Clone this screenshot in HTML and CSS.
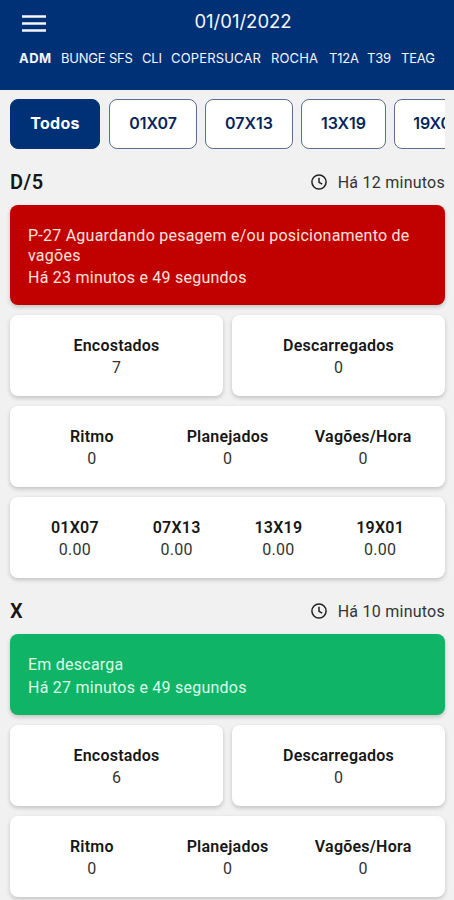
FILE: index.html
```
<!DOCTYPE html>
<html lang="pt-BR">
<head>
<meta charset="utf-8">
<meta name="viewport" content="width=device-width, initial-scale=1">
<title>Terminais</title>
<link rel="stylesheet" href="styles.css">
</head>
<body>
<header class="header">
  <div class="topbar">
    <svg class="menu" viewBox="0 0 24 17" width="24" height="17"><path d="M0 1.5h24M0 8.5h24M0 15.5h24" stroke="#f4f7fc" stroke-width="2.7"/></svg>
    <h1 class="date">01/01/2022</h1>
  </div>
  <nav class="tabs">
    <a class="tab tab-active">ADM</a><a class="tab">BUNGE SFS</a><a class="tab">CLI</a><a class="tab tab-wide">COPERSUCAR</a><a class="tab tab-wide">ROCHA</a><a class="tab">T12A</a><a class="tab">T39</a><a class="tab">TEAG</a>
  </nav>
</header>
<main class="content">
  <div class="chips">
    <button class="chip chip-active">Todos</button><button class="chip">01X07</button><button class="chip">07X13</button><button class="chip">13X19</button><button class="chip">19X01</button>
  </div>
  <section class="group">
    <div class="group-head">
      <h2 class="name">D/5</h2>
      <div class="ago"><svg class="clock" viewBox="0 0 16 16" width="16" height="16"><circle cx="8" cy="8" r="7.1"/><path d="M8 3.8v4.5l3.2 1.9"/></svg><span>Há 12 minutos</span></div>
    </div>
    <div class="alert alert-red"><p class="alert-title">P-27 Aguardando pesagem e/ou posicionamento de vagões</p><p class="alert-time">Há 23 minutos e 49 segundos</p></div>
    <div class="pair">
      <div class="card"><div class="stat"><b>Encostados</b><span>7</span></div></div>
      <div class="card"><div class="stat"><b>Descarregados</b><span>0</span></div></div>
    </div>
    <div class="card">
      <div class="stat"><b>Ritmo</b><span>0</span></div>
      <div class="stat"><b>Planejados</b><span>0</span></div>
      <div class="stat"><b>Vagões/Hora</b><span>0</span></div>
    </div>
    <div class="card">
      <div class="stat"><b>01X07</b><span>0.00</span></div>
      <div class="stat"><b>07X13</b><span>0.00</span></div>
      <div class="stat"><b>13X19</b><span>0.00</span></div>
      <div class="stat"><b>19X01</b><span>0.00</span></div>
    </div>
  </section>
  <section class="group">
    <div class="group-head">
      <h2 class="name">X</h2>
      <div class="ago"><svg class="clock" viewBox="0 0 16 16" width="16" height="16"><circle cx="8" cy="8" r="7.1"/><path d="M8 3.8v4.5l3.2 1.9"/></svg><span>Há 10 minutos</span></div>
    </div>
    <div class="alert alert-green"><p class="alert-title">Em descarga</p><p class="alert-time">Há 27 minutos e 49 segundos</p></div>
    <div class="pair">
      <div class="card"><div class="stat"><b>Encostados</b><span>6</span></div></div>
      <div class="card"><div class="stat"><b>Descarregados</b><span>0</span></div></div>
    </div>
    <div class="card">
      <div class="stat"><b>Ritmo</b><span>0</span></div>
      <div class="stat"><b>Planejados</b><span>0</span></div>
      <div class="stat"><b>Vagões/Hora</b><span>0</span></div>
    </div>
  </section>
</main>
</body>
</html>
```
FILE: styles.css
```
* { box-sizing: border-box; }
body { margin: 0; height: 900px; overflow: hidden; background: #f1f1f2; color: #171717; font: 16px/22px Roboto, sans-serif; }
h1, h2, p { margin: 0; }
.header { height: 90px; background: #003177; color: #f4f7fc; font-family: Inter, sans-serif; }
.topbar { display: grid; grid-template-columns: 80px 1fr 80px; height: 42px; align-items: center; }
.menu { margin: 4px 0 0 22px; }
.date { text-align: center; font-size: 18.5px; font-weight: 400; letter-spacing: 0; padding-left: 32px; }
.tabs { display: grid; grid-template-columns: 42px 81px 29px 100px 58px 38px 34px 38px; padding-left: 19px; height: 32px; align-items: center; font-size: 13px; white-space: nowrap; letter-spacing: -.2px; }
.tab-active { font-weight: 700; letter-spacing: .5px; }
.tab-wide { letter-spacing: .15px; }
.content { padding: 9px 9px 0 10px; }
.chips { display: grid; grid-template-columns: 90px 88px 88px 85px 88px; column-gap: 8px; padding-left: 0; height: 50px; overflow: hidden; }
.chip { height: 50px; margin-left: 1px; margin-right: -1px; padding: 0 0 3px; border: 1px solid #57718f; border-radius: 8px; background: #fff; color: #05245c; font: 600 16px Inter, sans-serif; }
.chip-active { margin: 0; background: #003177; border-color: #003177; color: #fff; font-weight: 700; letter-spacing: .3px; }
.chip:last-child { padding-right: 5px; }
.group { display: flex; flex-direction: column; gap: 10px; }
.group-head { display: flex; justify-content: space-between; align-items: center; height: 46px; margin-top: 10px; margin-bottom: -10px; }
.name { font-size: 20px; font-weight: 600; letter-spacing: .5px; }
.ago { display: flex; align-items: center; gap: 11px; color: #343434; letter-spacing: .25px; }
.ago span { padding-top: 2px; }
.clock { fill: none; stroke: #222; stroke-width: 1.5; }
.alert { border-radius: 8px; padding: 21px 18px 16px; letter-spacing: .24px; box-shadow: 0 2px 4px #0003; }
.alert-title { line-height: 20px; }
.alert-time { margin-top: 1px; }
.alert-red { background: #c10000; color: #ffe3dd; height: 100px; }
.alert-green { background: #10b466; color: #dcfbea; height: 81px; }
.alert-green .alert-time { margin-top: 2px; }
.pair { display: grid; grid-template-columns: 1fr 1fr; gap: 9px; }
.card { display: grid; grid-auto-flow: column; grid-auto-columns: 1fr; height: 81px; padding: 20px 14px 18px; border-radius: 8px; background: #fff; box-shadow: 0 2px 4px #0003; }
.stat { display: flex; flex-direction: column; align-items: center; letter-spacing: .22px; }
.stat b { font-weight: 600; }
.stat span { color: #333; }
```
